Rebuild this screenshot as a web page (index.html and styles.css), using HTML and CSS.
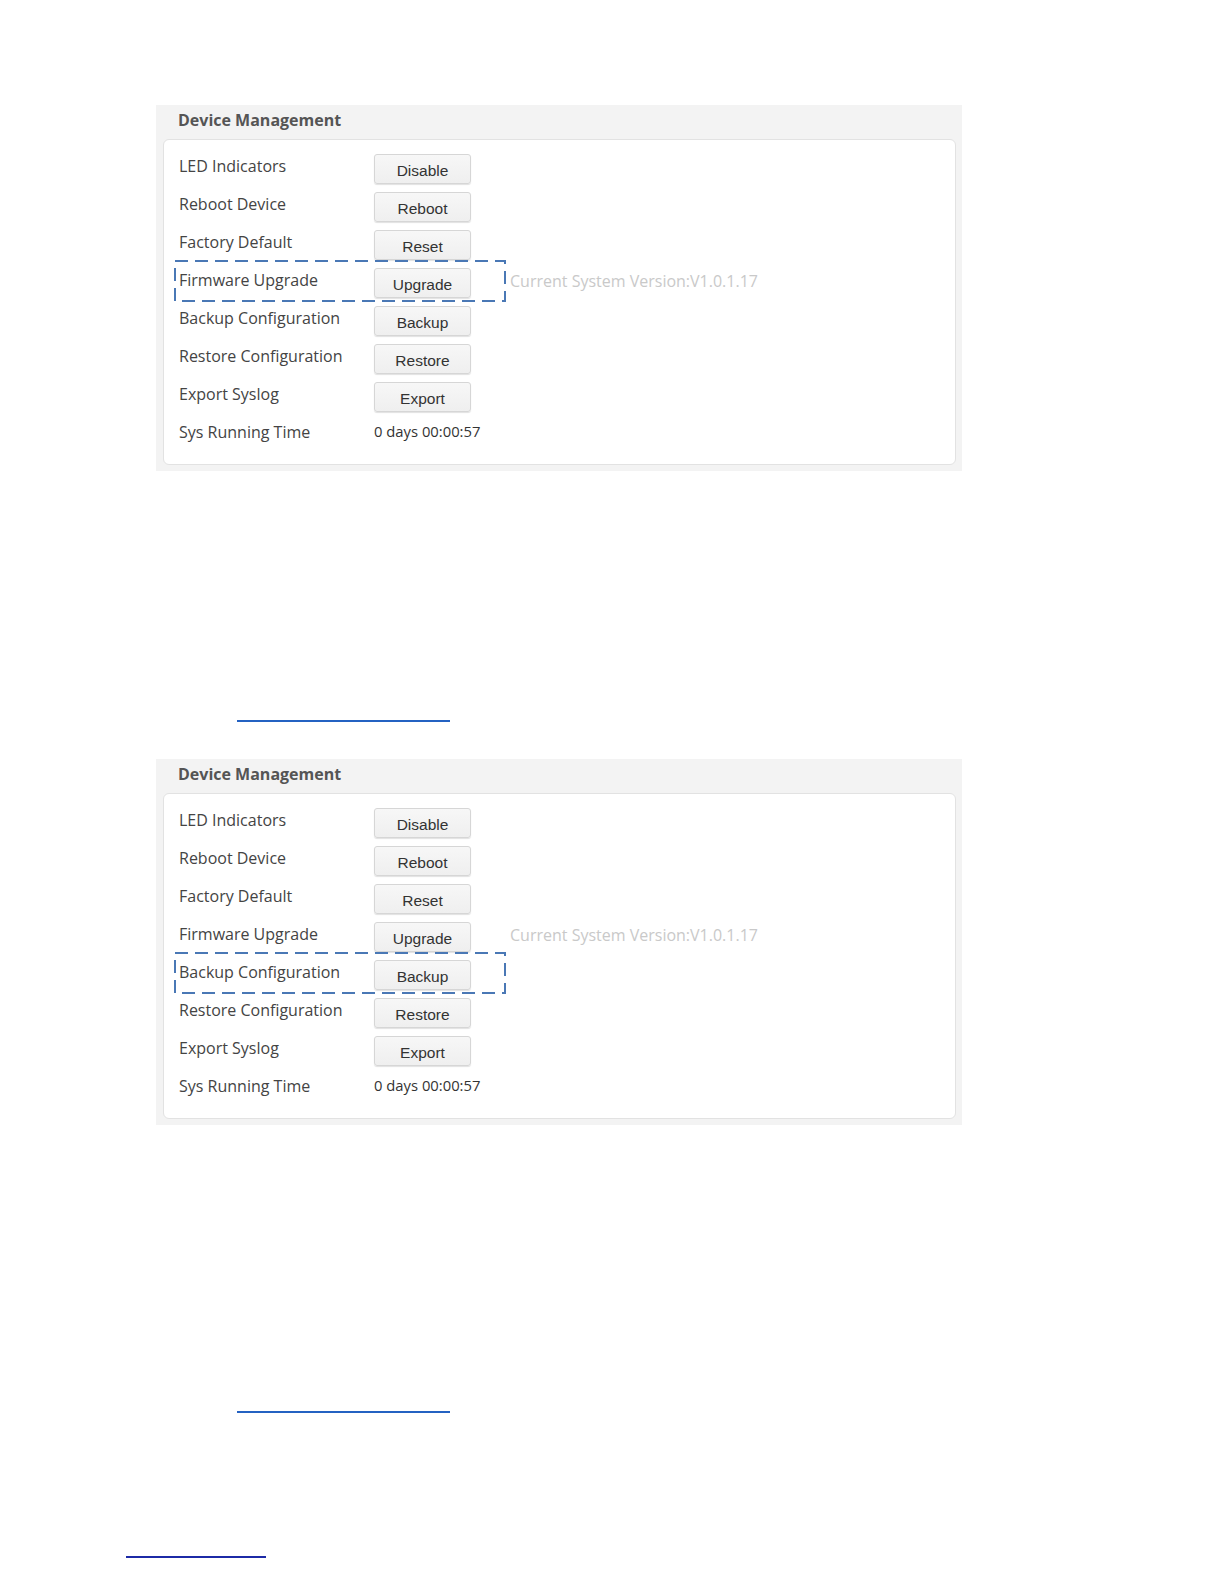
FILE: index.html
```html
<!DOCTYPE html>
<html lang="en">
<head>
    <meta charset="UTF-8">
    <meta name="viewport" content="width=device-width, initial-scale=1.0">
    <title>Device Management</title>
    <link rel="stylesheet" href="styles.css">
</head>
<body>
    <div class="page">
        <section class="panel">
            <div class="panel-title">Device Management</div>
            <div class="panel-box">
                <div class="row">
                    <span class="label">LED Indicators</span>
                    <button class="btn">Disable</button>
                </div>
                <div class="row">
                    <span class="label">Reboot Device</span>
                    <button class="btn">Reboot</button>
                </div>
                <div class="row">
                    <span class="label">Factory Default</span>
                    <button class="btn">Reset</button>
                </div>
                <div class="row marked">
                    <span class="label">Firmware Upgrade</span>
                    <button class="btn">Upgrade</button>
                    <span class="version">Current System Version:V1.0.1.17</span>
                    <svg class="mark" width="332" height="42" viewBox="0 0 332 42">
                        <rect x="1" y="1" width="330" height="40" fill="none" stroke="#4a78b5" stroke-width="2" stroke-dasharray="13 7"/>
                    </svg>
                </div>
                <div class="row">
                    <span class="label">Backup Configuration</span>
                    <button class="btn">Backup</button>
                </div>
                <div class="row">
                    <span class="label">Restore Configuration</span>
                    <button class="btn">Restore</button>
                </div>
                <div class="row">
                    <span class="label">Export Syslog</span>
                    <button class="btn">Export</button>
                </div>
                <div class="row last">
                    <span class="label">Sys Running Time</span>
                    <span class="value">0 days 00:00:57</span>
                </div>
            </div>
        </section>

        <div class="rule rule-mid rule-first"></div>

        <section class="panel">
            <div class="panel-title">Device Management</div>
            <div class="panel-box">
                <div class="row">
                    <span class="label">LED Indicators</span>
                    <button class="btn">Disable</button>
                </div>
                <div class="row">
                    <span class="label">Reboot Device</span>
                    <button class="btn">Reboot</button>
                </div>
                <div class="row">
                    <span class="label">Factory Default</span>
                    <button class="btn">Reset</button>
                </div>
                <div class="row">
                    <span class="label">Firmware Upgrade</span>
                    <button class="btn">Upgrade</button>
                    <span class="version">Current System Version:V1.0.1.17</span>
                </div>
                <div class="row marked">
                    <span class="label">Backup Configuration</span>
                    <button class="btn">Backup</button>
                    <svg class="mark" width="332" height="42" viewBox="0 0 332 42">
                        <rect x="1" y="1" width="330" height="40" fill="none" stroke="#4a78b5" stroke-width="2" stroke-dasharray="13 7"/>
                    </svg>
                </div>
                <div class="row">
                    <span class="label">Restore Configuration</span>
                    <button class="btn">Restore</button>
                </div>
                <div class="row">
                    <span class="label">Export Syslog</span>
                    <button class="btn">Export</button>
                </div>
                <div class="row last">
                    <span class="label">Sys Running Time</span>
                    <span class="value">0 days 00:00:57</span>
                </div>
            </div>
        </section>

        <div class="rule rule-mid rule-second"></div>
        <div class="rule rule-short"></div>
    </div>
</body>
</html>
```

FILE: styles.css
```css
html {
    overflow: hidden;
}
body {
    margin: 0;
    height: 1584px;
    background: #fff;
    font-family: "Open Sans", "Noto Sans", sans-serif;
    color: #444;
}
.page {
    padding: 105px 0 0 156px;
}
.panel {
    width: 806px;
    background: #f3f3f3;
    padding: 0 6px 6px 7px;
    box-sizing: border-box;
}
.panel-title {
    height: 34px;
    line-height: 30px;
    padding-left: 15px;
    font-size: 16px;
    font-weight: bold;
    color: #555;
}
.panel-box {
    background: #fff;
    border: 1px solid #e2e2e2;
    border-radius: 6px;
    padding: 14px 0 22px 15px;
    display: flex;
    flex-direction: column;
    gap: 8px;
}
.row {
    position: relative;
    display: flex;
    align-items: flex-start;
    height: 30px;
}
.row.last {
    height: 22px;
}
.label {
    width: 195px;
    line-height: 24px;
    font-size: 16px;
    color: #444;
}
.btn {
    width: 97px;
    height: 30px;
    margin: 0;
    padding: 3px 0 0;
    background: linear-gradient(#f7f7f7, #efefef);
    border: 1px solid #d6d6d6;
    border-radius: 3px;
    box-shadow: 0 1px 1px rgba(0, 0, 0, 0.12);
    font-family: "Liberation Sans", Arial, sans-serif;
    font-size: 15.5px;
    color: #333;
}
.version {
    margin-left: 39px;
    line-height: 26px;
    font-size: 16px;
    color: #c9c9c9;
}
.value {
    line-height: 22px;
    font-size: 14.8px;
    color: #333;
}
.mark {
    position: absolute;
    left: -5px;
    top: -8px;
}
.rule {
    height: 2px;
}
.rule-mid {
    width: 213px;
    margin-left: 81px;
    background: #2462c2;
}
.rule-first {
    margin-top: 249px;
    margin-bottom: 37px;
}
.rule-second {
    margin-top: 286px;
}
.rule-short {
    width: 140px;
    margin: 143px 0 0 -30px;
    background: #1c2aa6;
}
```
